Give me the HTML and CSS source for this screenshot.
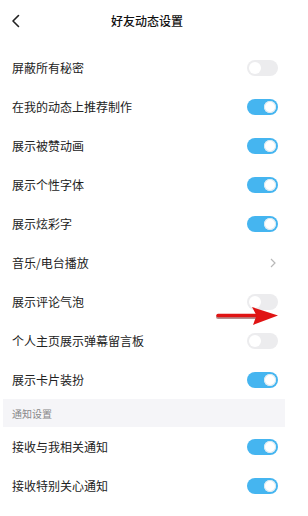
FILE: index.html
```html
<!DOCTYPE html>
<html lang="zh">
<head>
<meta charset="utf-8">
<link rel="stylesheet" href="styles.css">
</head>
<body>
<div class="screen">
  <header class="topbar">
    <svg class="back" width="10" height="14" viewBox="0 0 10 14"><path d="M7.5 1.5 L2 7 L7.5 12.5" fill="none" stroke="#222" stroke-width="1.6" stroke-linecap="round" stroke-linejoin="round"/></svg>
    <div class="title">好友动态设置</div>
  </header>
  <div class="list">
    <div class="row"><span>屏蔽所有秘密</span><span class="sw off"></span></div>
    <div class="row"><span>在我的动态上推荐制作</span><span class="sw on"></span></div>
    <div class="row"><span>展示被赞动画</span><span class="sw on"></span></div>
    <div class="row"><span>展示个性字体</span><span class="sw on"></span></div>
    <div class="row"><span>展示炫彩字</span><span class="sw on"></span></div>
    <div class="row"><span>音乐/电台播放</span><svg class="chev" width="6" height="10" viewBox="0 0 6 10"><path d="M1 1 L5 5 L1 9" fill="none" stroke="#b8b8b8" stroke-width="1.2"/></svg></div>
    <div class="row"><span>展示评论气泡</span><span class="sw off"></span></div>
    <div class="row"><span>个人主页展示弹幕留言板</span><span class="sw off"></span></div>
    <div class="row"><span>展示卡片装扮</span><span class="sw on"></span></div>
    <div class="section">通知设置</div>
    <div class="row"><span>接收与我相关通知</span><span class="sw on"></span></div>
    <div class="row"><span>接收特别关心通知</span><span class="sw on"></span></div>
  </div>
  <svg class="arrow" width="64" height="22" viewBox="0 0 64 22">
    <path d="M2 12 L40 12" stroke="#5a0808" stroke-width="4" stroke-linecap="round" opacity="0.45"/>
    <path d="M2 10.5 L40 10.5" stroke="#e01414" stroke-width="3.4" stroke-linecap="round"/>
    <path d="M36 2 L62 10.5 L37 20 L40.5 10.5 Z" fill="#e01414"/>
  </svg>
</div>
</body>
</html>
```

FILE: styles.css
```css
html, body { margin: 0; padding: 0; background: #fff; }
body { font-family: "Noto Sans CJK SC", "Noto Sans", sans-serif; color: #222; }
.screen { position: relative; width: 308px; height: 516px; overflow: hidden; }
.topbar { height: 40px; display: flex; align-items: center; justify-content: center; position: relative; }
.back { position: absolute; left: 11px; top: 14px; }
.title { font-size: 12px; font-weight: 500; color: #111; margin-left: -14px; }
.list { width: 290px; padding-top: 8px; }
.row { height: 39px; display: flex; align-items: center; justify-content: space-between; padding: 0 12px; font-size: 12px; color: #222; }
.row .chev { margin-right: 2px; }
.sw { width: 31px; height: 16px; border-radius: 8px; position: relative; }
.sw::after { content: ""; position: absolute; top: 2px; width: 12px; height: 12px; border-radius: 50%; background: #fff; }
.sw.on { background: #45b5f0; }
.sw.on::after { right: 2px; box-shadow: inset 0 0 0 1px #d8e8f0; }
.sw.off { background: #ececee; }
.sw.off::after { left: 2px; }
.section { margin: 0 5px 0 3px; height: 28px; background: #f5f5f8; font-size: 10px; color: #888; display: flex; align-items: center; padding-left: 9px; }
.arrow { position: absolute; left: 216px; top: 305px; }
```
